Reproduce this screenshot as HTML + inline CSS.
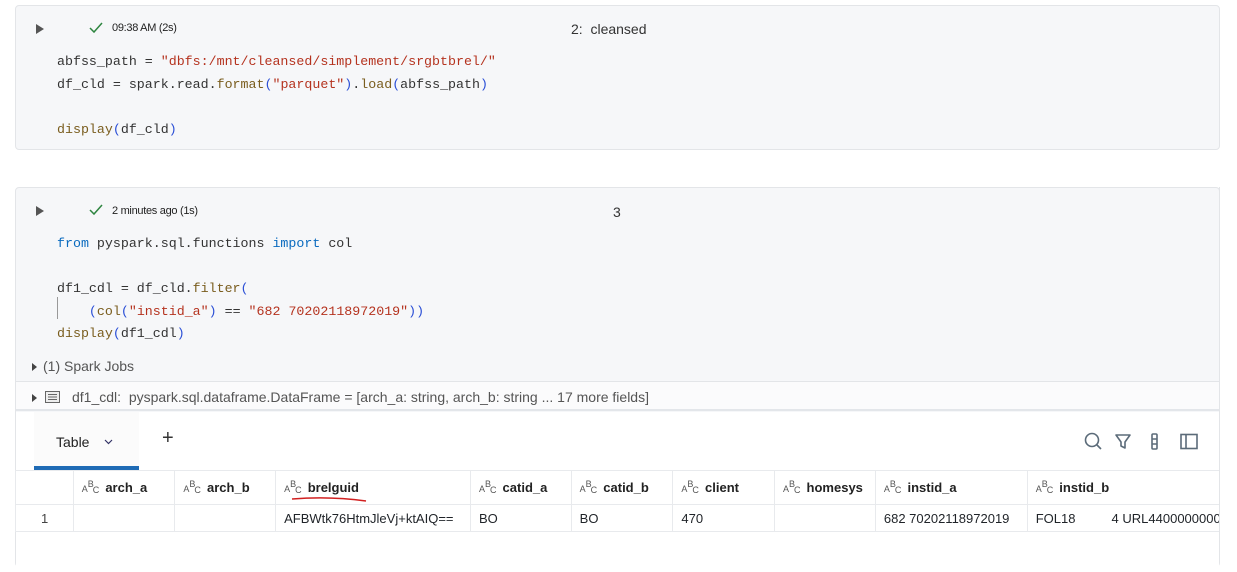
<!DOCTYPE html>
<html><head><meta charset="utf-8"><style>
*{margin:0;padding:0;box-sizing:border-box}
body{width:1237px;height:547px;background:#fff;position:relative;overflow:hidden;font-family:"Liberation Sans",sans-serif;color:#1f2328}
.cell{position:absolute;left:15px;width:1205px;background:#f6f7f9;border:1px solid #e3e5e8;border-radius:4px}
.abs{position:absolute}
.code{position:absolute;left:41px;font-family:"Liberation Mono","DejaVu Sans Mono",monospace;font-size:13.3px;color:#333;white-space:pre;line-height:22.5px}
.s{color:#b5331f}.k{color:#0b6bbf}.f{color:#7a5d1e}.p{color:#2b4fd6}
.meta{font-size:11px;color:#222;letter-spacing:-0.3px}
.run{width:0;height:0;border-left:8px solid #555;border-top:5px solid transparent;border-bottom:5px solid transparent}
.tri{width:0;height:0;border-left:5px solid #444;border-top:4px solid transparent;border-bottom:4px solid transparent}
table{border-collapse:collapse;position:absolute;left:0;top:470px;font-size:13.5px;table-layout:fixed}
td{border:1px solid #e8eaed;height:34px;padding:0 8px;white-space:nowrap;overflow:hidden}
tr.h td{font-weight:bold;color:#222;font-size:13px}
tr.d td{height:27px;font-size:13px}
.ic{font-size:9px;color:#555;position:relative;display:inline-block;width:20px;height:14px;vertical-align:-2px;font-weight:normal}
.ic b{position:absolute;font-weight:normal}
</style></head><body>

<div class="cell" style="top:5px;height:145px">
  <div class="abs run" style="left:20px;top:18px"></div>
  <svg class="abs" style="left:73px;top:16px" width="14" height="12"><path d="M1 6 L5 10 L13 1" stroke="#2e8540" stroke-width="1.5" fill="none"/></svg>
  <div class="abs meta" style="left:96px;top:16px">09:38 AM (2s)</div>
  <div class="abs" style="left:555px;top:15px;font-size:14px;color:#333">2:&nbsp; cleansed</div>
  <div class="code" style="top:45px">abfss_path = <span class="s">"dbfs:/mnt/cleansed/simplement/srgbtbrel/"</span>
df_cld = spark.read.<span class="f">format</span><span class="p">(</span><span class="s">"parquet"</span><span class="p">)</span>.<span class="f">load</span><span class="p">(</span>abfss_path<span class="p">)</span>

<span class="f">display</span><span class="p">(</span>df_cld<span class="p">)</span></div>
</div>

<div class="cell" style="top:187px;height:380px">
  <div class="abs run" style="left:20px;top:18px"></div>
  <svg class="abs" style="left:73px;top:16px" width="14" height="12"><path d="M1 6 L5 10 L13 1" stroke="#2e8540" stroke-width="1.5" fill="none"/></svg>
  <div class="abs meta" style="left:96px;top:17px">2 minutes ago (1s)</div>
  <div class="abs" style="left:597px;top:16px;font-size:14px;color:#333">3</div>
  <div class="code" style="top:45px"><span class="k">from</span> pyspark.sql.functions <span class="k">import</span> col

df1_cdl = df_cld.<span class="f">filter</span><span class="p">(</span>
    <span class="p">(</span><span class="f">col</span><span class="p">(</span><span class="s">"instid_a"</span><span class="p">)</span> == <span class="s">"682 70202118972019"</span><span class="p">))</span>
<span class="f">display</span><span class="p">(</span>df1_cdl<span class="p">)</span></div>
  <div class="abs" style="left:41px;top:109px;width:1px;height:22px;background:#999"></div>
  <div class="abs tri" style="left:16px;top:175px"></div>
  <div class="abs" style="left:27px;top:170px;font-size:14px;color:#555">(1) Spark Jobs</div>
  <div class="abs" style="left:0;top:193px;width:1203px;height:30px;background:#fbfbfc;border-top:1px solid #e3e5e8;border-bottom:2px solid #e3e6ea"></div>
  <div class="abs tri" style="left:16px;top:206px"></div>
  <svg class="abs" style="left:29px;top:203px" width="15" height="12"><rect x="0.5" y="0.5" width="14" height="11" fill="#eee" stroke="#666"/><path d="M3 3.5H12M3 6H12M3 8.5H12" stroke="#666"/></svg>
  <div class="abs" style="left:56px;top:201px;font-size:14px;color:#555">df1_cdl:&nbsp; pyspark.sql.dataframe.DataFrame = [arch_a: string, arch_b: string ... 17 more fields]</div>
  <div class="abs" style="left:0;top:224px;width:1203px;height:160px;background:#fff">
    <div class="abs" style="left:18px;top:0;width:105px;height:57px;background:#fbfbfb"></div>
    <div class="abs" style="left:40px;top:22px;font-size:14px;color:#222">Table</div>
    <svg class="abs" style="left:88px;top:27px" width="9" height="6"><path d="M1 1L4.5 4.5L8 1" stroke="#336" stroke-width="1.2" fill="none"/></svg>
    <div class="abs" style="left:146px;top:15px;font-size:20px;color:#333">+</div>
    <div class="abs" style="left:18px;top:54px;width:105px;height:4px;background:#1f6bb5"></div>
    <svg class="abs" style="left:1068px;top:20px" width="130" height="20" fill="none" stroke="#5b6b79" stroke-width="1.6">
      <circle cx="8" cy="8" r="6.5"/><path d="M13 13L17 17"/>
      <path d="M32 3H46L41 10V16L37 14V10Z" stroke-linejoin="round"/>
      <rect x="68" y="2" width="5" height="15" rx="1"/><path d="M68 7H73M68 12H73"/>
      <rect x="97" y="2.5" width="16" height="14"/><path d="M102 2.5V16.5"/>
    </svg>
  </div>
</div>

<table style="left:15px">
<colgroup><col style="width:58px"><col style="width:102px"><col style="width:101px"><col style="width:195px"><col style="width:101px"><col style="width:102px"><col style="width:102px"><col style="width:101px"><col style="width:152px"><col style="width:190px"></colgroup>
<tr class="h" style="background:#fff">
<td></td>
<td><span class="ic"><b style="left:0;top:4px">A</b><b style="left:6px;top:-1px">B</b><b style="left:11px;top:5px">C</b></span> arch_a</td>
<td><span class="ic"><b style="left:0;top:4px">A</b><b style="left:6px;top:-1px">B</b><b style="left:11px;top:5px">C</b></span> arch_b</td>
<td style="position:relative"><span class="ic"><b style="left:0;top:4px">A</b><b style="left:6px;top:-1px">B</b><b style="left:11px;top:5px">C</b></span> brelguid<svg style="position:absolute;left:14px;top:25px" width="80" height="8"><path d="M2 3Q40 0 76 5" stroke="#d12020" stroke-width="1.6" fill="none"/></svg></td>
<td><span class="ic"><b style="left:0;top:4px">A</b><b style="left:6px;top:-1px">B</b><b style="left:11px;top:5px">C</b></span> catid_a</td>
<td><span class="ic"><b style="left:0;top:4px">A</b><b style="left:6px;top:-1px">B</b><b style="left:11px;top:5px">C</b></span> catid_b</td>
<td><span class="ic"><b style="left:0;top:4px">A</b><b style="left:6px;top:-1px">B</b><b style="left:11px;top:5px">C</b></span> client</td>
<td><span class="ic"><b style="left:0;top:4px">A</b><b style="left:6px;top:-1px">B</b><b style="left:11px;top:5px">C</b></span> homesys</td>
<td><span class="ic"><b style="left:0;top:4px">A</b><b style="left:6px;top:-1px">B</b><b style="left:11px;top:5px">C</b></span> instid_a</td>
<td><span class="ic"><b style="left:0;top:4px">A</b><b style="left:6px;top:-1px">B</b><b style="left:11px;top:5px">C</b></span> instid_b</td>
</tr>
<tr class="d" style="background:#fff">
<td style="padding-left:25px;color:#444">1</td><td></td><td></td><td>AFBWtk76HtmJleVj+ktAIQ==</td><td>BO</td><td>BO</td><td>470</td><td></td><td>682 70202118972019</td><td>FOL18&nbsp;&nbsp;&nbsp;&nbsp;&nbsp;&nbsp;&nbsp;&nbsp;&nbsp;&nbsp;4 URL44000000000</td>
</tr>
</table>
<div class="abs" style="left:1219px;top:410px;width:18px;height:137px;background:#fff"></div>
<div class="abs" style="left:1219px;top:187px;width:1px;height:360px;background:#e3e5e8"></div>
</body></html>
